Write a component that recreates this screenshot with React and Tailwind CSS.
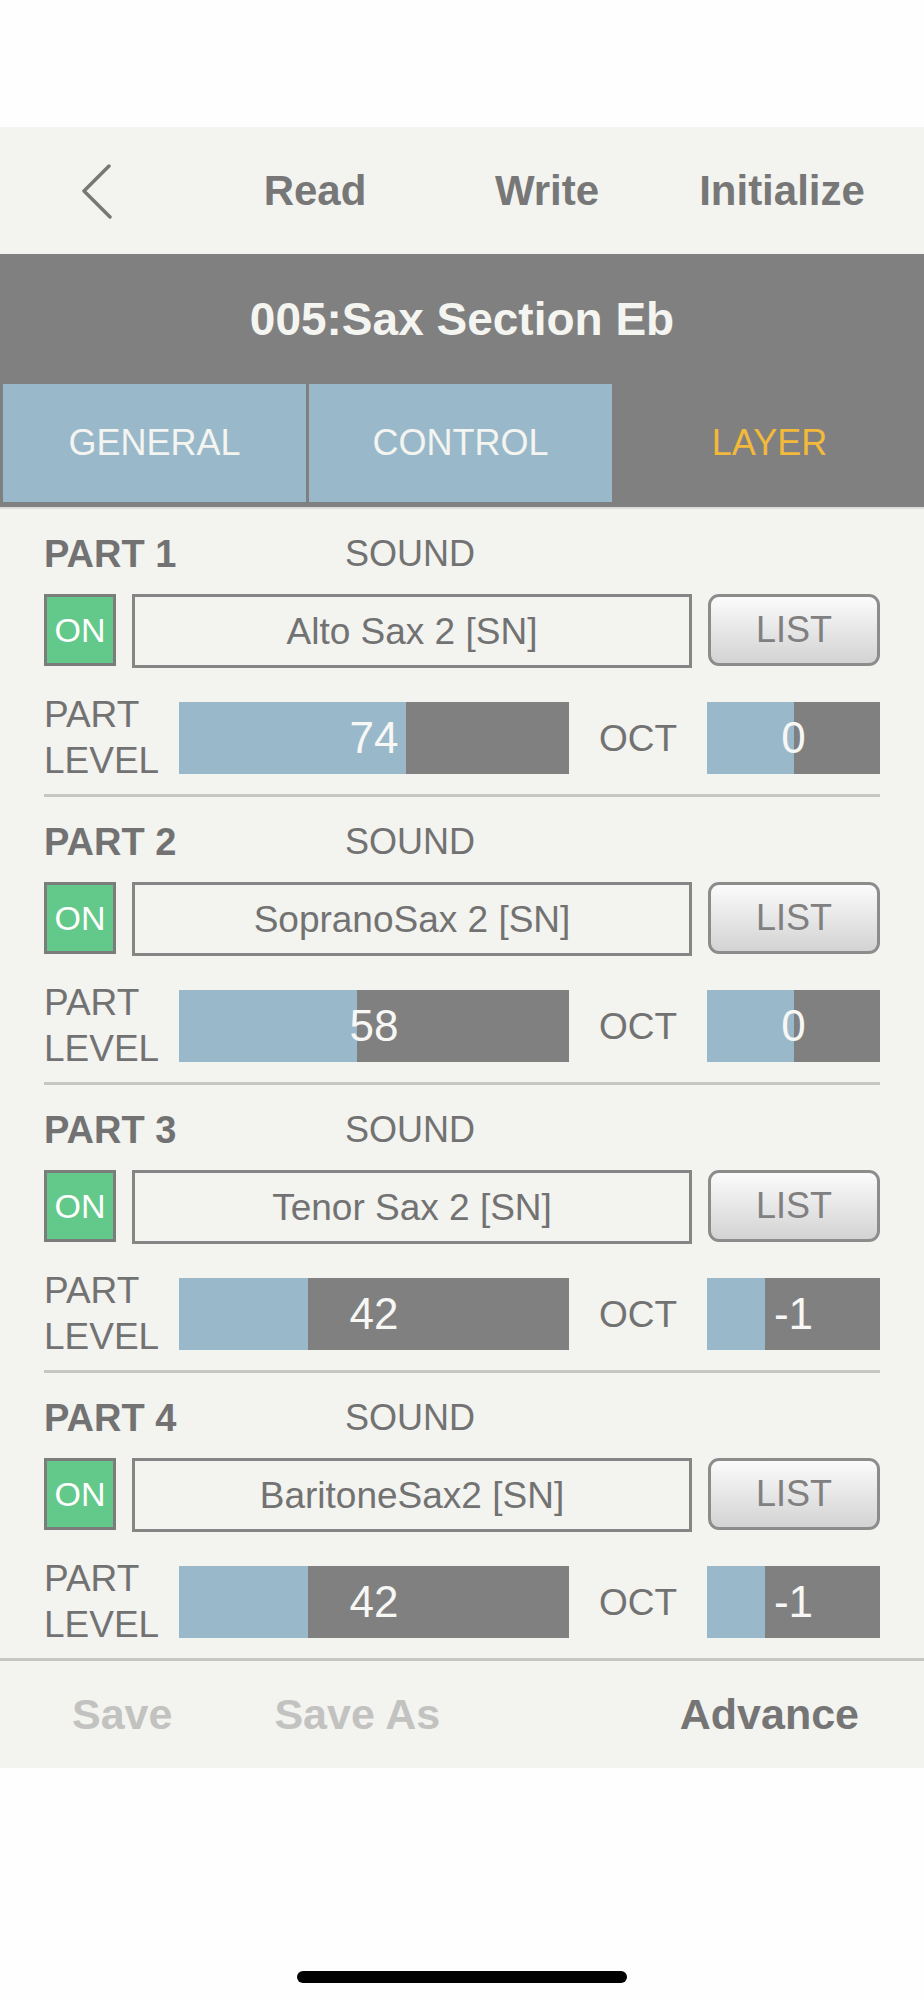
import React from 'react';

const parts = [
  { n: 1, sound: 'Alto Sax 2 [SN]', level: 74, oct: 0 },
  { n: 2, sound: 'SopranoSax 2 [SN]', level: 58, oct: 0 },
  { n: 3, sound: 'Tenor Sax 2 [SN]', level: 42, oct: -1 },
  { n: 4, sound: 'BaritoneSax2 [SN]', level: 42, oct: -1 },
];

const Bar = ({ width, fill, value }) => (
  <div className={`relative h-[72px] bg-[#808080] ${width}`}>
    <div className="h-full bg-[#99b9ca]" style={{ width: `${fill * 100}%` }} />
    <div className="absolute inset-0 flex items-center justify-center text-[44px] leading-none text-[#f7f7f5]">
      {value}
    </div>
  </div>
);

const Part = ({ part, last }) => (
  <div className={last ? 'pt-[23px] pb-[20px]' : 'pt-[23px]'}>
    <div className="flex h-[44px] items-center">
      <div className="w-[301px] text-[38px] font-bold leading-none text-[#727272]">PART {part.n}</div>
      <div className="text-[36px] leading-none text-[#727272]">SOUND</div>
    </div>
    <div className="mt-[18px] flex h-[72px] gap-4">
      <div className="flex w-[72px] items-center justify-center border-[3px] border-[#7c7c7c] bg-[#62c98a] text-[34px] leading-none text-white">
        ON
      </div>
      <div className="flex h-[74px] flex-1 items-center justify-center border-[3px] border-[#858585] text-[37px] leading-none text-[#727272]">
        {part.sound}
      </div>
      <div className="flex w-[172px] items-center justify-center rounded-[11px] border-[3px] border-[#8c8c8c] bg-linear-to-b from-[#fbfbfb] to-[#d3d3d3] text-[36px] leading-none text-[#808080]">
        LIST
      </div>
    </div>
    <div className="mt-[36px] flex h-[72px] items-center">
      <div className="w-[135px] text-[37px] leading-[46px] text-[#727272]">
        PART
        <br />
        LEVEL
      </div>
      <Bar width="w-[390px]" fill={part.level / 127} value={part.level} />
      <div className="w-[138px] text-center text-[37px] leading-none text-[#727272]">OCT</div>
      <Bar width="w-[173px]" fill={(part.oct + 3) / 6} value={part.oct} />
    </div>
    {!last && <div className="mt-[20px] h-[3px] bg-[#c6c6c4]" />}
  </div>
);

export default function App() {
  return (
    <div className="w-[924px] bg-[#fefefe] font-['Liberation_Sans',Arial,sans-serif]">
      <div className="h-[127px]" />

      {/* top nav */}
      <div className="flex h-[127px] items-center bg-[#f3f3ef]">
        <div className="w-[199px] pl-[80px]">
          <svg width="34" height="56" viewBox="0 0 34 56" fill="none">
            <path d="M29 3 L4 28 L30 54" stroke="#777777" strokeWidth="3.5" strokeLinecap="round" strokeLinejoin="round" />
          </svg>
        </div>
        <div className="w-[232px] text-center text-[42px] font-bold leading-none text-[#777777]">Read</div>
        <div className="w-[232px] text-center text-[42px] font-bold leading-none text-[#777777]">Write</div>
        <div className="w-[238px] text-center text-[42px] font-bold leading-none text-[#777777]">Initialize</div>
      </div>

      {/* title */}
      <div className="flex h-[129px] items-center justify-center bg-[#808080] text-[46px] font-bold leading-none text-[#f4f4f0]">
        005:Sax Section Eb
      </div>

      {/* tabs */}
      <div className="flex h-[124px] gap-[3px] bg-[#808080] pt-[1px] pb-[5px] pl-[3px]">
        <div className="flex w-[303px] items-center justify-center bg-[#99b9ca] text-[36px] leading-none text-[#f4f4f0]">GENERAL</div>
        <div className="flex w-[303px] items-center justify-center bg-[#99b9ca] text-[36px] leading-none text-[#f4f4f0]">CONTROL</div>
        <div className="flex flex-1 items-center justify-center text-[36px] leading-none text-[#f2b93b]">LAYER</div>
      </div>
      <div className="h-[2px] bg-[#dcdcd8]" />

      {/* parts */}
      <div className="bg-[#f3f3ef] px-[44px]">
        {parts.map((p, i) => (
          <Part key={p.n} part={p} last={i === parts.length - 1} />
        ))}
      </div>

      {/* footer */}
      <div className="flex h-[110px] items-center border-t-[3px] border-[#c6c6c4] bg-[#f3f3ef] pl-[72px] pr-[65px] text-[43px] font-bold leading-none">
        <span className="text-[#c2c2c0]">Save</span>
        <span className="ml-[102px] text-[#c2c2c0]">Save As</span>
        <span className="ml-auto text-[#757575]">Advance</span>
      </div>

      <div className="h-[233px] pt-[203px]">
        <div className="mx-auto h-[12px] w-[330px] rounded-full bg-black" />
      </div>
    </div>
  );
}
